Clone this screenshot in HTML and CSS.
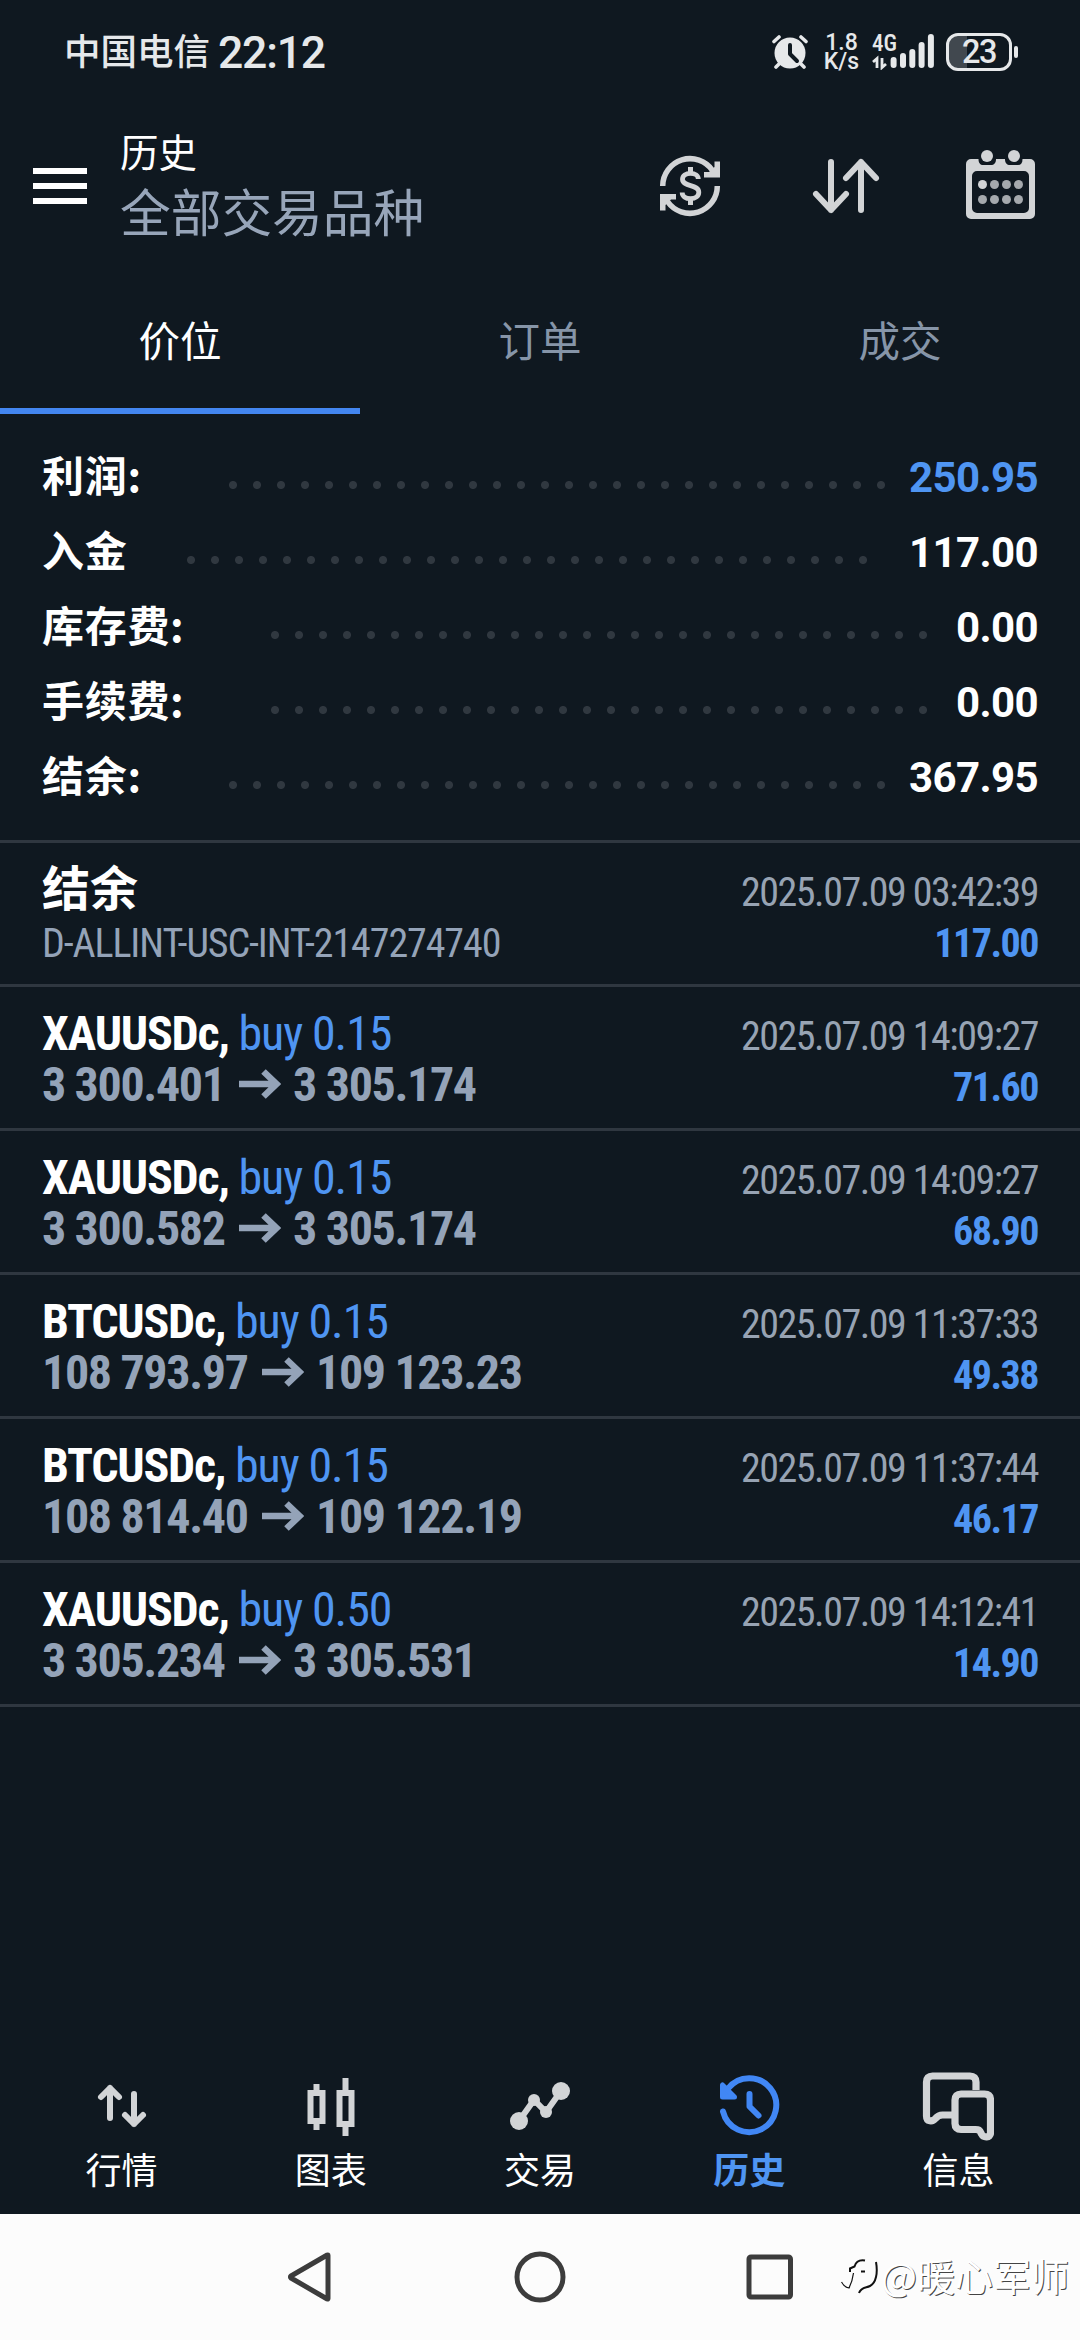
FILE: index.html
```html
<!DOCTYPE html>
<html lang="zh-CN">
<head>
<meta charset="utf-8">
<title>历史</title>
<link rel="stylesheet" href="styles.css">
</head>
<body>
<div class="screen">
  <div class="status">
    <span class="carrier">中国电信</span>
    <span class="clock">22:12</span>
    <div class="status-icons">
      <svg class="alarm" width="36" height="36" viewBox="0 0 36 36">
        <g stroke="#e6e8ea" stroke-width="3.6" stroke-linecap="round" fill="none">
          <path d="M2 7.5L7 3M34 7.5L29 3M8 29l-4 4M28 29l4 4"/>
        </g>
        <circle cx="18" cy="19" r="15.5" fill="#e6e8ea"/>
        <path d="M18 11v9l7 7" fill="none" stroke="#0f1820" stroke-width="4" stroke-linecap="round" stroke-linejoin="round"/>
      </svg>
      <div class="speed"><span>1.8</span><span>K/s</span></div>
      <div class="signal">
        <span class="net">4G</span>
        <svg width="64" height="36" viewBox="0 0 64 36">
          <path d="M1 28l4-3.500v9.500M10 24v9.500l4-3.500" fill="none" stroke="#e6e8ea" stroke-width="2.800"/>
          <g fill="#e6e8ea">
            <rect x="18.600" y="23" width="6" height="11" rx="3"/>
            <rect x="28" y="19" width="6" height="15" rx="3"/>
            <rect x="37.300" y="15" width="6" height="19" rx="3"/>
            <rect x="46.600" y="8" width="6" height="26" rx="3"/>
            <rect x="55.900" y="0" width="6" height="34" rx="3"/>
          </g>
        </svg>
      </div>
      <div class="battery"><span>23</span></div>
      <i class="battery-nub"></i>
    </div>
  </div>

  <header class="header">
    <div class="menu"><i></i><i></i><i></i></div>
    <div class="titles">
      <div class="title">历史</div>
      <div class="subtitle">全部交易品种</div>
    </div>
    <div class="actions">
      <svg width="72" height="72" viewBox="0 0 72 72" fill="none" stroke="#d2d4d6">
        <path d="M8.700 36A27.300 27.300 0 0 1 58.500 20.500M63.300 36A27.300 27.300 0 0 1 13.500 51.500" stroke-width="5.500"/>
        <path d="M66 11.500v16H50v-5.500h5L60.500 17v-5.500zM6 60.500V44h16v5.500h-5L11.500 55v5.500z" fill="#d2d4d6" stroke="none"/>
        <path d="M44.300 29c0-3.500-3.200-5.700-7.800-5.700s-8 2.200-8 6c0 8 16.300 4.700 16.300 12.900 0 4-3.300 6.500-8.300 6.500s-8.300-2.500-8.300-6.200" stroke-width="4.800"/>
        <path d="M36.500 17v6M36.500 49v6" stroke-width="5"/>
      </svg>
      <svg width="72" height="72" viewBox="0 0 72 72" fill="none" stroke="#d2d4d6" stroke-width="6" stroke-linecap="round" stroke-linejoin="round">
        <path d="M21 12v48M6 44l15 16 15-16M51 60V12M36 28l15-16 15 16"/>
      </svg>
      <svg width="72" height="72" viewBox="0 0 72 72">
        <path fill="#d2d4d6" fill-rule="evenodd" d="M5 9h7.500c0 4 2 6 4.500 6h8c3 0 5-2 5-6h9c0 4 2 6 5 6h8c3 0 4.500-2 4.500-6H64a5 5 0 0 1 5 5v50a5 5 0 0 1-5 5H5a5 5 0 0 1-5-5V14a5 5 0 0 1 5-5zM11 21a5 5 0 0 0-5 5v32a5 5 0 0 0 5 5h47a5 5 0 0 0 5-5V26a5 5 0 0 0-5-5z"/>
        <circle cx="21" cy="6" r="6" fill="#d2d4d6"/><circle cx="48" cy="6" r="6" fill="#d2d4d6"/>
        <circle cx="16.500" cy="34.500" r="4.500" fill="#d2d4d6"/>
        <g fill="#a5a9ad"><circle cx="28.500" cy="34.500" r="4.500"/><circle cx="40.500" cy="34.500" r="4.500"/><circle cx="52.500" cy="34.500" r="4.500"/><circle cx="16.500" cy="49.500" r="4.500"/><circle cx="28.500" cy="49.500" r="4.500"/><circle cx="40.500" cy="49.500" r="4.500"/><circle cx="52.500" cy="49.500" r="4.500"/></g>
      </svg>
    </div>
  </header>

  <nav class="tabs">
    <div class="tab active">价位</div>
    <div class="tab">订单</div>
    <div class="tab">成交</div>
  </nav>

  <section class="summary">
    <div class="sum-row"><span>利润:</span><i class="dots"></i><b class="blue">250.95</b></div>
    <div class="sum-row"><span>入金</span><i class="dots long"></i><b>117.00</b></div>
    <div class="sum-row"><span>库存费:</span><i class="dots short"></i><b>0.00</b></div>
    <div class="sum-row"><span>手续费:</span><i class="dots short"></i><b>0.00</b></div>
    <div class="sum-row"><span>结余:</span><i class="dots"></i><b>367.95</b></div>
  </section>

  <section class="deals">
    <div class="deal">
      <div class="left"><div><b class="cjk">结余</b></div><div class="note"><span>D-ALLINT-USC-INT-2147274740</span></div></div>
      <div class="right"><div>2025.07.09 03:42:39</div><div class="profit">117.00</div></div>
    </div>
    <div class="deal">
      <div class="left"><div><b>XAUUSDc,</b> <span class="side">buy 0.15</span></div>
        <div class="prices">3 300.401 <svg class="arrow" viewBox="0 0 42 30"><path d="M0 15h37M24.500 2.500L37.500 15 24.500 27.500"/></svg> 3 305.174</div></div>
      <div class="right"><div>2025.07.09 14:09:27</div><div class="profit">71.60</div></div>
    </div>
    <div class="deal">
      <div class="left"><div><b>XAUUSDc,</b> <span class="side">buy 0.15</span></div>
        <div class="prices">3 300.582 <svg class="arrow" viewBox="0 0 42 30"><path d="M0 15h37M24.500 2.500L37.500 15 24.500 27.500"/></svg> 3 305.174</div></div>
      <div class="right"><div>2025.07.09 14:09:27</div><div class="profit">68.90</div></div>
    </div>
    <div class="deal">
      <div class="left"><div><b>BTCUSDc,</b> <span class="side">buy 0.15</span></div>
        <div class="prices">108 793.97 <svg class="arrow" viewBox="0 0 42 30"><path d="M0 15h37M24.500 2.500L37.500 15 24.500 27.500"/></svg> 109 123.23</div></div>
      <div class="right"><div>2025.07.09 11:37:33</div><div class="profit">49.38</div></div>
    </div>
    <div class="deal">
      <div class="left"><div><b>BTCUSDc,</b> <span class="side">buy 0.15</span></div>
        <div class="prices">108 814.40 <svg class="arrow" viewBox="0 0 42 30"><path d="M0 15h37M24.500 2.500L37.500 15 24.500 27.500"/></svg> 109 122.19</div></div>
      <div class="right"><div>2025.07.09 11:37:44</div><div class="profit">46.17</div></div>
    </div>
    <div class="deal">
      <div class="left"><div><b>XAUUSDc,</b> <span class="side">buy 0.50</span></div>
        <div class="prices">3 305.234 <svg class="arrow" viewBox="0 0 42 30"><path d="M0 15h37M24.500 2.500L37.500 15 24.500 27.500"/></svg> 3 305.531</div></div>
      <div class="right"><div>2025.07.09 14:12:41</div><div class="profit">14.90</div></div>
    </div>
  </section>

  <nav class="bottom">
    <div class="item">
      <svg viewBox="0 0 72 72" fill="none" stroke="#d2d4d6" stroke-width="6" stroke-linecap="round" stroke-linejoin="round"><path d="M24 48V18M15 27l9-9 9 9M48 24v30M39 45l9 9 9-9"/></svg>
      <span>行情</span>
    </div>
    <div class="item">
      <svg viewBox="0 0 72 72" fill="none" stroke="#d2d4d6" stroke-width="6"><path d="M15.500 23h12v28h-12zM21.500 14v7M21.500 53v7M44.500 23h12v31h-12zM50.500 8v13M50.500 56v10"/></svg>
      <span>图表</span>
    </div>
    <div class="item">
      <svg viewBox="0 0 72 72" fill="#d2d4d6"><circle cx="15" cy="51" r="9"/><circle cx="30" cy="30" r="6"/><circle cx="42" cy="42" r="6"/><circle cx="57" cy="21" r="9"/><path d="M15 51l15-21 12 12 15-21" fill="none" stroke="#d2d4d6" stroke-width="6"/></svg>
      <span>交易</span>
    </div>
    <div class="item active">
      <svg viewBox="0 0 72 72" fill="none" stroke="#4187f5" stroke-width="6" stroke-linecap="round" stroke-linejoin="round"><path d="M10 41.500A27 27 0 1 0 15 18.500l-3 3.500"/><path d="M9.500 15v12h12z" fill="#4187f5" stroke-width="5"/><path d="M36.500 24v12.500l9 9"/></svg>
      <span>历史</span>
    </div>
    <div class="item">
      <svg viewBox="0 0 72 72" fill="none" stroke="#d2d4d6" stroke-width="7.200" stroke-linejoin="round"><path d="M54 20v-8q0-6-6-6H10.500q-6 0-6 6v34c0 6 6 6 9 2.500 2-2.500 4-3.500 7-3.500h12"/><path d="M39 24h23.500q6 0 6 6v33c0 5-7 5-9 1-2-4.500-3-4.500-6-4.500H39q-6 0-6-6V30q0-6 6-6z"/></svg>
      <span>信息</span>
    </div>
  </nav>

  <div class="sysnav">
    <svg viewBox="0 0 60 60"><path d="M48 8.500v43q0 .800-.800.500L11 31q-1.200-1 0-2L47.200 8q.800-.300.800.500z"/></svg>
    <svg viewBox="0 0 60 60"><circle cx="30" cy="30" r="23"/></svg>
    <svg viewBox="0 0 60 60"><rect x="9" y="10" width="41.500" height="40" rx="2"/></svg>
    <div class="watermark">
      <svg width="40" height="44" viewBox="0 0 40 44" fill="none" stroke="#111">
        <path stroke-width="2" d="M24 7.500c-6-1-9 1-10.500 6L9 15.500v3.500M20 18.500h4M35 9c2 11 0 21-6 24-4 2-9 1-11 7"/>
        <path stroke-width="1.200" d="M12.500 20q-1 8-4.500 15-5-1-7.500-6"/>
      </svg>
      <span>@暖心军师</span>
    </div>
  </div>
</div>
</body>
</html>
```
FILE: styles.css
```css
* { box-sizing: border-box; }
body { margin: 0; background: #0f1820; }
.screen {
  width: 1080px;
  height: 2340px;
  display: flex;
  flex-direction: column;
  background: #0f1820;
  color: #fff;
  font-family: Roboto, "Noto Sans CJK SC", sans-serif;
  overflow: hidden;
}
svg { display: block; flex: none; }

/* status bar */
.status {
  height: 105px;
  padding: 0 62px 2px 64px;
  display: flex;
  align-items: center;
  color: #e6e8ea;
}
.carrier { font-size: 36.500px; font-weight: 500; line-height: 50px; padding-top: 2px; }
.clock { margin-left: 8px; font-size: 44.500px; font-weight: 500; letter-spacing: -1.200px; line-height: 50px; padding-top: 2px; }
.status-icons { margin-left: auto; display: flex; align-items: center; }
.speed {
  margin-left: 17px;
  width: 33px;
  display: flex;
  flex-direction: column;
  align-items: center;
  font-size: 23px;
  line-height: 19px;
  font-weight: 500;
}
.signal { margin-left: 14px; width: 64px; height: 36px; display: grid; }
.signal > * { grid-area: 1 / 1; }
.net { font: 500 23px/19px "Roboto Condensed", Roboto, sans-serif; }
.battery {
  margin-left: 10px;
  width: 66px;
  height: 38px;
  border: 3px solid #e6e8ea;
  border-radius: 12px;
  background: linear-gradient(90deg, #41484f 18px, transparent 18px);
  text-align: center;
  font: 500 32.500px/33px Roboto, sans-serif;
  letter-spacing: -1.500px;
}
.battery-nub { width: 4px; height: 12px; margin-left: 2px; border-radius: 2px; background: #e6e8ea; }

/* title bar */
.header { height: 177px; display: flex; padding: 0 42px 0 33px; }
.menu { width: 54px; margin-top: 63px; display: flex; flex-direction: column; gap: 9px; }
.menu i { height: 6px; background: #fff; }
.titles { margin: 24px 0 0 33px; }
.title { font-size: 38.500px; line-height: 50px; }
.subtitle { margin-top: 6px; font-size: 50.700px; line-height: 60px; color: #97a5b9; }
.actions { margin: 45px 0 0 auto; display: flex; gap: 84px; }

/* tabs */
.tabs { height: 132px; display: grid; grid-template-columns: repeat(3, 1fr); }
.tab { height: 132px; font-size: 41.500px; line-height: 122px; text-align: center; color: #8695a8; border-bottom: 6px solid transparent; }
.tab.active { color: #fff; border-color: #4386f0; }

/* totals */
.summary { height: 426px; padding: 26px 42px 0; }
.sum-row { height: 75px; display: flex; align-items: center; font-size: 42px; line-height: 75px; font-weight: 700; }
.sum-row span { font-family: "Noto Sans CJK SC", sans-serif; padding-bottom: 7px; line-height: 60px; letter-spacing: .7px; }
.sum-row b { font-weight: 700; letter-spacing: -.6px; }
.dots {
  width: 672px;
  height: 24px;
  margin: 15px 16px 0 auto;
  background: radial-gradient(circle at 12px 12px, #303840 3.500px, transparent 4.500px) 0 0 / 24px 24px;
}
.dots.long { width: 696px; margin-right: 34px; }
.dots.short { margin-right: 21px; }
.blue { color: #4f95f2; }

/* deal list */
.deals { border-bottom: 3px solid #2f3740; font-family: "Roboto Condensed", Roboto, "Noto Sans CJK SC", sans-serif; }
.deal {
  height: 144px;
  border-top: 3px solid #2f3740;
  padding: 21px 42px 0 42px;
  display: flex;
  justify-content: space-between;
  font-size: 48px;
  line-height: 51px;
  letter-spacing: -1.250px;
  white-space: nowrap;
}
.cjk { letter-spacing: 0; }
.side { color: #4f95f2; letter-spacing: -1.100px; }
.note, .prices { color: #94a3b8; }
.note span { font-size: 40px; line-height: 1; letter-spacing: -1.100px; }
.prices { font-weight: 700; letter-spacing: -1.350px; }
.arrow { display: inline-block; width: 42px; height: 30px; margin: 0 2px 0 5px; vertical-align: 2px; fill: none; stroke: #94a3b8; stroke-width: 6.500px; }
.right { padding-top: 3px; font-size: 40px; text-align: right; letter-spacing: -1.500px; color: #97a3b3; }
.profit { font-weight: 700; color: #4f95f2; }

/* bottom navigation */
.bottom { margin-top: auto; height: 144px; padding: 0 17px; display: grid; grid-template-columns: repeat(5, 1fr); }
.item { display: flex; flex-direction: column; align-items: center; font-size: 36px; line-height: 42px; }
.item svg { width: 72px; height: 72px; margin-bottom: 9px; }
.item.active { color: #4f95f2; font-weight: 700; }

/* system keys */
.sysnav { position: relative; flex: none; height: 126px; background: #fcfcfc; display: flex; align-items: center; justify-content: center; gap: 170px; }
.sysnav > svg { width: 60px; height: 60px; fill: none; stroke: #3c3c3c; stroke-width: 5px; stroke-linejoin: round; }
.watermark { position: absolute; left: 841px; top: 38px; display: flex; align-items: center; }
.watermark span {
  font: 400 38px/46px "Noto Sans CJK SC", sans-serif;
  color: #fff;
  text-shadow: 1px 1px 0 #444;
}
```
